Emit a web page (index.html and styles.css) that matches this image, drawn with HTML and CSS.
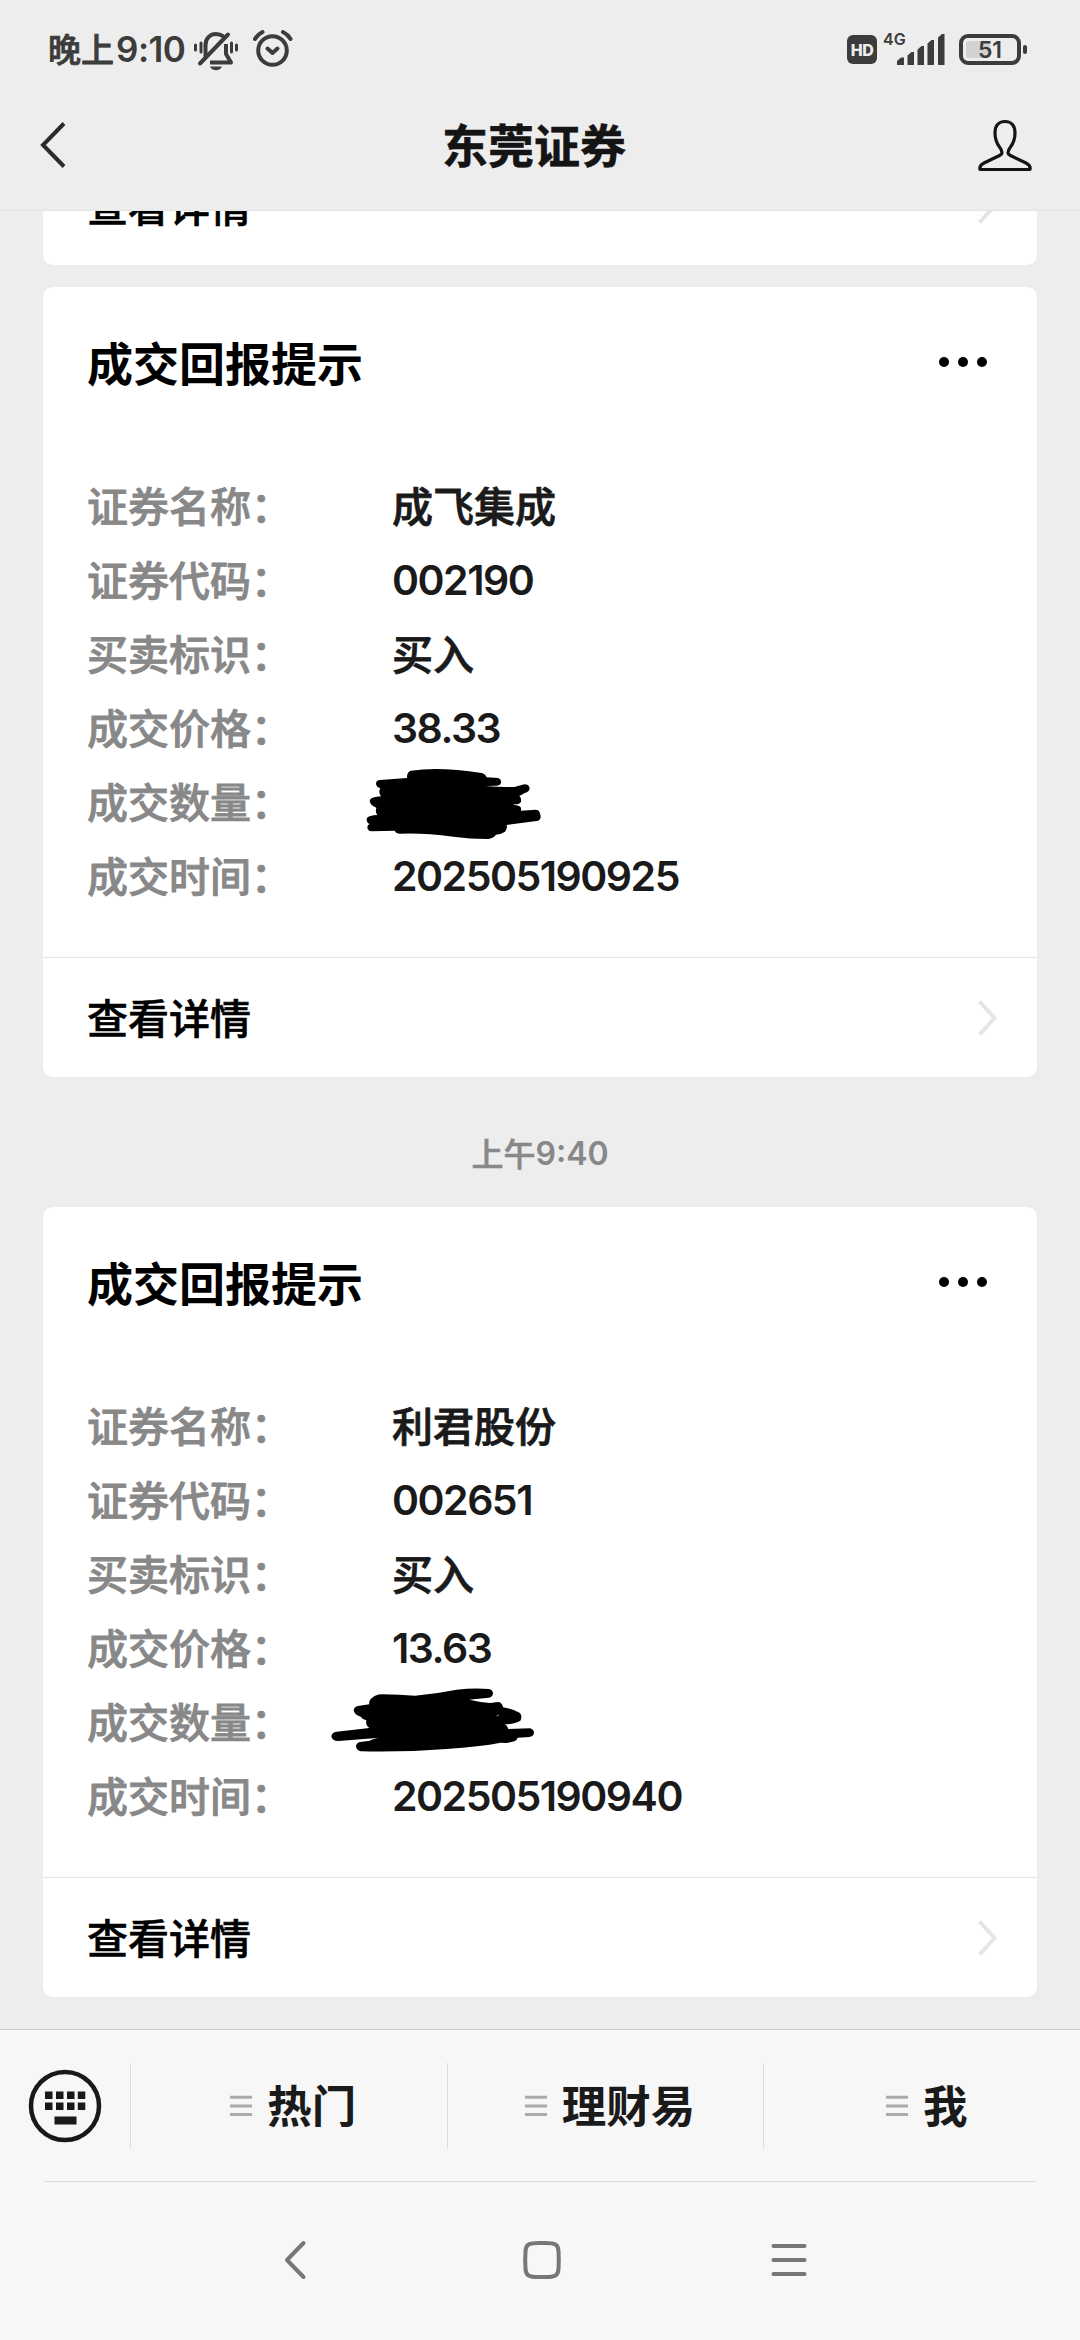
FILE: index.html
```html
<!DOCTYPE html>
<html lang="zh-CN">
<head>
    <meta charset="UTF-8">
    <meta name="viewport" content="width=device-width, initial-scale=1.0">
    <title>东莞证券</title>
    <link rel="stylesheet" href="styles.css">
</head>
<body>
    <div class="phone">
        <div class="status-bar">
            <div class="clock"><span class="clock-text">晚上</span><span class="clock-num">9:10</span></div>
            <svg class="icon-bell" width="46" height="42" viewBox="0 0 46 42" fill="none" stroke="#3c3c3c" stroke-width="4" stroke-linecap="round" stroke-linejoin="round">
                <path d="M2.500 15v5M8 13v9M38.500 13v9M43.500 15v5" stroke-width="3"/>
                <path d="M12.500 26V15c0-7 5-11 10.500-11 3 0 5 .8 7 2.200"/>
                <path d="M35 4.500L7 33.500"/>
                <path d="M33 14v10l5 8.500H17" stroke-linecap="butt"/>
                <path d="M17 36.500h12c-2 5-10 5-12 0z" fill="#3c3c3c" stroke="none"/>
            </svg>
            <svg class="icon-alarm" width="40" height="38" viewBox="0 0 40 38" fill="none" stroke="#3c3c3c" stroke-width="4" stroke-linecap="round" stroke-linejoin="round">
                <circle cx="19.500" cy="20.500" r="14.300"/>
                <path d="M14.500 18.500l5 4.500 5-4.500"/>
                <path d="M2 9c2-3.500 4.500-5.500 7.500-7M37.500 9c-2-3.500-4.500-5.500-7.500-7"/>
            </svg>
            <div class="status-right">
                <span class="hd">HD</span>
                <span class="net">4G</span>
                <svg class="icon-signal" width="48" height="31" viewBox="0 0 48 31" fill="#3c3c3c">
                    <path d="M0 27l4-3.500h3V31H0zM10.500 21.500l4-3.500H17v13h-6.500zM20.500 15.500l4-3.500H27v19h-6.500zM30.500 9.500l4-3.500H37v25h-6.500zM41 3.500L45 0h2.500v31H41z"/>
                </svg>
                <span class="battery"><span class="battery-fill"></span><span class="battery-num">51</span></span>
            </div>
        </div>

        <div class="nav-bar">
            <svg class="nav-back" width="26" height="46" viewBox="0 0 26 46" fill="none" stroke="#2b2b2b" stroke-width="4">
                <path d="M24 1.500L3 23l21 21.500"/>
            </svg>
            <h1>东莞证券</h1>
            <svg class="nav-user" width="54" height="52" viewBox="0 0 54 52" fill="none" stroke="#141414" stroke-width="3.200" stroke-linejoin="round">
                <path d="M27 2.500c-7 0-10 5-10 11.500 0 6 1.500 10 4.500 14 2 2.500 2.500 3.500 2.500 5.500s-1.500 2.500-3 3.300L6 44c-3 1.500-4.200 3-4.200 5.500 0 .7.500 1 1 1h48.400c.5 0 1-.3 1-1 0-2.500-1.200-4-4.200-5.500l-15-7.200c-1.500-.8-3-1.300-3-3.300s.5-3 2.500-5.500c3-4 4.500-8 4.500-14 0-6.500-3-11.500-10-11.500z"/>
            </svg>
        </div>

        <div class="messages">
            <div class="card">
                <div class="card-more">
                    <span>查看详情</span>
                    <svg width="19" height="36" viewBox="0 0 19 36" fill="none" stroke="#e5e5e5" stroke-width="4"><path d="M1.500 1.500L16.500 18l-15 16.500"/></svg>
                </div>
            </div>

            <div class="card">
                <div class="card-head">
                    <h2>成交回报提示</h2>
                    <div class="dots"><i></i><i></i><i></i></div>
                </div>
                <div class="rows">
                    <div class="row"><span class="label">证券名称：</span><span class="value">成飞集成</span></div>
                    <div class="row"><span class="label">证券代码：</span><span class="value num">002190</span></div>
                    <div class="row"><span class="label">买卖标识：</span><span class="value">买入</span></div>
                    <div class="row"><span class="label">成交价格：</span><span class="value num">38.33</span></div>
                    <div class="row">
                        <span class="label">成交数量：</span>
                        <span class="value">
                            <svg class="scribble scribble-a" width="220" height="74" viewBox="0 78 660 222">
                                <path d="M213 92Q300 80 425 99Q437 103 440 112L475 114Q485 118 483 129Q480 137 468 137L437 138Q490 142 523 141L553 133Q568 133 569 146Q567 155 556 158L538 168Q545 174 543 185Q540 192 527 193L518 194Q540 196 543 203V212L588 209Q599 210 600 221Q606 236 595 242L500 255Q503 267 495 275Q483 283 468 284Q458 297 440 297Q390 297 340 290Q250 278 180 281Q168 281 164 272L95 274Q82 273 82 261Q83 255 88 253Q77 245 81 234Q87 226 112 225Q105 218 109 203Q90 197 89 181Q93 171 123 169Q114 158 121 145Q108 142 108 130Q109 121 120 120L201 114Q200 96 213 92Z"/>
                            </svg>
                        </span>
                    </div>
                    <div class="row"><span class="label">成交时间：</span><span class="value num">202505190925</span></div>
                </div>
                <div class="card-more">
                    <span>查看详情</span>
                    <svg width="19" height="36" viewBox="0 0 19 36" fill="none" stroke="#e5e5e5" stroke-width="4"><path d="M1.500 1.500L16.500 18l-15 16.500"/></svg>
                </div>
            </div>

            <div class="time"><span class="time-text">上午</span><span class="time-num">9:40</span></div>

            <div class="card">
                <div class="card-head">
                    <h2>成交回报提示</h2>
                    <div class="dots"><i></i><i></i><i></i></div>
                </div>
                <div class="rows">
                    <div class="row"><span class="label">证券名称：</span><span class="value">利君股份</span></div>
                    <div class="row"><span class="label">证券代码：</span><span class="value num">002651</span></div>
                    <div class="row"><span class="label">买卖标识：</span><span class="value">买入</span></div>
                    <div class="row"><span class="label">成交价格：</span><span class="value num">13.63</span></div>
                    <div class="row">
                        <span class="label">成交数量：</span>
                        <span class="value">
                            <svg class="scribble scribble-b" width="240" height="74" viewBox="0 78 720 222">
                                <path d="M245 103Q300 104 345 107Q410 101 470 89Q520 83 568 87Q579 90 579 101Q577 112 565 113L508 119Q540 127 570 129L595 126Q607 128 609 142Q640 147 660 159Q668 170 661 182Q645 192 615 193Q624 199 625 207L690 205Q702 208 702 219Q700 230 688 231L653 233Q650 243 637 245L620 249L602 248Q540 260 440 267Q310 277 182 274Q168 270 168 257Q171 245 187 245L210 242Q218 236 240 233L115 243Q96 243 94 229Q95 217 110 215L208 204Q196 197 199 181Q187 178 182 170Q163 165 161 151Q163 138 178 137L208 133Q206 119 217 113Q227 104 245 103Z"/>
                                <path d="M590 168l6-3" stroke="#fff" stroke-width="2"/>
                            </svg>
                        </span>
                    </div>
                    <div class="row"><span class="label">成交时间：</span><span class="value num">202505190940</span></div>
                </div>
                <div class="card-more">
                    <span>查看详情</span>
                    <svg width="19" height="36" viewBox="0 0 19 36" fill="none" stroke="#e5e5e5" stroke-width="4"><path d="M1.500 1.500L16.500 18l-15 16.500"/></svg>
                </div>
            </div>
        </div>

        <div class="menu-bar">
            <div class="keyboard">
                <svg width="74" height="74" viewBox="0 0 74 74">
                    <circle cx="37" cy="37" r="34" fill="none" stroke="#191919" stroke-width="4.500"/>
                    <path fill="#191919" d="M17 22.500h7.500V30H17zM28 22.500h7.500V30H28zM39 22.500h7.500V30H39zM49.800 22.500h7.500V30h-7.500zM17 33.500h7.500V41H17zM28 33.500h7.500V41H28zM39 33.500h7.500V41H39zM49.800 33.500h7.500V41h-7.500zM26.500 47.500h22v8h-22z"/>
                </svg>
            </div>
            <div class="menu-item">
                <svg width="22" height="22" viewBox="0 0 22 22" stroke="#ababab" stroke-width="3"><path d="M0 2.300h22M0 11h22M0 19.600h22"/></svg>
                <span>热门</span>
            </div>
            <div class="menu-item">
                <svg width="22" height="22" viewBox="0 0 22 22" stroke="#ababab" stroke-width="3"><path d="M0 2.300h22M0 11h22M0 19.600h22"/></svg>
                <span>理财易</span>
            </div>
            <div class="menu-item">
                <svg width="22" height="22" viewBox="0 0 22 22" stroke="#ababab" stroke-width="3"><path d="M0 2.300h22M0 11h22M0 19.600h22"/></svg>
                <span>我</span>
            </div>
        </div>

        <div class="system-nav">
            <svg width="40" height="40" viewBox="0 0 40 40" fill="none" stroke="#777" stroke-width="4" stroke-linecap="round" stroke-linejoin="round"><path d="M28.500 3L12 20l16.500 17"/></svg>
            <svg width="40" height="40" viewBox="0 0 40 40" fill="none" stroke="#777" stroke-width="4"><path d="M20 3h3c10.500 0 13 1.500 13.500 8 .4 6 .4 12 0 18-.5 6.500-3 8-13.500 8h-6c-10.500 0-13-1.500-13.500-8-.4-6-.4-12 0-18C4 4.500 6.500 3 17 3z"/></svg>
            <svg width="40" height="40" viewBox="0 0 40 40" fill="none" stroke="#777" stroke-width="4" stroke-linecap="round"><path d="M4.500 6h31M4.500 20h31M4.500 34h31"/></svg>
        </div>
    </div>
</body>
</html>
```
FILE: styles.css
```css
* {
    margin: 0;
    padding: 0;
    box-sizing: border-box;
}

body {
    background-color: #ededed;
    font-family: "Noto Sans CJK SC", sans-serif;
    font-weight: 500;
    color: #1a1a1a;
}

svg {
    display: block;
    flex-shrink: 0;
}

.phone {
    width: 1080px;
    height: 2340px;
    display: flex;
    flex-direction: column;
    overflow: hidden;
}

/* 状态栏 */
.status-bar {
    height: 98px;
    padding: 0 53px 0 48px;
    display: flex;
    align-items: center;
    color: #3c3c3c;
}

.clock {
    display: flex;
    align-items: center;
    width: 145px;
    font-size: 33px;
    white-space: nowrap;
}

.clock-text {
    padding-bottom: 2px;
    -webkit-text-stroke: 0.8px;
}

.clock-num {
    font-family: Inter, sans-serif;
    font-size: 35px;
    font-weight: 600;
    letter-spacing: -0.5px;
    margin-left: 2px;
}

.icon-bell {
    margin-top: 3px;
}

.icon-alarm {
    margin-left: 14px;
}

.status-right {
    margin-left: auto;
    display: flex;
    align-items: center;
}

.hd {
    width: 30px;
    height: 29px;
    border-radius: 6px;
    background-color: #3c3c3c;
    color: #ededed;
    font: 800 16px/30px Inter, sans-serif;
    letter-spacing: -0.5px;
    text-align: center;
}

.net {
    width: 20px;
    height: 34px;
    margin-left: 6px;
    font: 600 16px/14px Inter, sans-serif;
}

.icon-signal {
    margin-right: 14px;
    margin-left: -6px;
}

.battery {
    position: relative;
    width: 62px;
    height: 31px;
    margin-right: 6px;
    border: 4px solid #3c3c3c;
    border-radius: 9px;
}

.battery::after {
    content: "";
    position: absolute;
    right: -10px;
    top: 7px;
    width: 4px;
    height: 9px;
    border-radius: 2px;
    background-color: #3c3c3c;
}

.battery-fill {
    position: absolute;
    left: 3px;
    top: 3px;
    width: 24px;
    height: 17px;
    border-radius: 3px;
    background-color: #d2d2d2;
}

.battery-num {
    position: relative;
    display: block;
    font: 600 23px/24px Inter, sans-serif;
    text-align: center;
}

/* 标题栏 */
.nav-bar {
    height: 113px;
    padding: 0 48px 18px 40px;
    display: flex;
    align-items: center;
    justify-content: space-between;
    border-bottom: 1px solid #e3e3e3;
}

.nav-bar h1 {
    margin-left: 24px;
    padding-bottom: 5px;
    font-size: 46px;
    font-weight: 700;
    line-height: 60px;
    color: #141414;
    -webkit-text-stroke: 0.6px;
}

/* 消息列表 */
.messages {
    height: 1818px;
    padding: 0 43px 32px;
    display: flex;
    flex-direction: column;
    justify-content: flex-end;
    overflow: hidden;
}

.card {
    flex-shrink: 0;
    background-color: #fff;
    border-radius: 10px;
}

.card + .card {
    margin-top: 22px;
}

.card-head {
    height: 183px;
    padding: 44px 50px 0 44px;
    display: flex;
    justify-content: space-between;
}

.card-head h2 {
    font-size: 46px;
    font-weight: 700;
    line-height: 60px;
    color: #000;
}

.dots {
    height: 62px;
    display: flex;
    align-items: center;
    gap: 9px;
}

.dots i {
    width: 10px;
    height: 10px;
    border-radius: 50%;
    background-color: #000;
}

.rows {
    padding: 0 44px 43px;
}

.row {
    display: flex;
    height: 74px;
    font-size: 41px;
    line-height: 68px;
    white-space: nowrap;
    -webkit-text-stroke: 0.8px;
}

.label {
    width: 305px;
    color: #888;
}

.value {
    position: relative;
}

.num {
    font-family: Inter, sans-serif;
    font-weight: 600;
    line-height: 73px;
    letter-spacing: -1.5px;
    -webkit-text-stroke: 0;
}

/* 涂抹遮盖 */
.scribble {
    position: absolute;
    top: 0;
}

.scribble-a {
    left: -52px;
}

.scribble-b {
    left: -92px;
}

.card-more {
    height: 120px;
    padding: 0 40px 0 44px;
    display: flex;
    align-items: center;
    justify-content: space-between;
    border-top: 1px solid #e5e5e5;
    font-size: 41px;
    color: #000;
}

.card-more span {
    padding-bottom: 4px;
    -webkit-text-stroke: 0.6px;
}

.time {
    flex-shrink: 0;
    height: 130px;
    padding-top: 22px;
    display: flex;
    align-items: center;
    justify-content: center;
    font-size: 32px;
    color: #888;
}

.time-text {
    padding-bottom: 3px;
    -webkit-text-stroke: 0.6px;
}

.time-num {
    font-family: Inter, sans-serif;
    font-weight: 600;
}

/* 底部菜单 */
.menu-bar {
    position: relative;
    height: 153px;
    display: flex;
    align-items: center;
    background-color: #f7f7f7;
    border-top: 1px solid #cbcbcb;
}

.menu-bar::after {
    content: "";
    position: absolute;
    left: 44px;
    right: 44px;
    bottom: 0;
    height: 1px;
    background-color: #dcdcdc;
}

.keyboard {
    width: 130px;
    padding-left: 28px;
}

.menu-item {
    flex: 1;
    height: 86px;
    padding-left: 9px;
    display: flex;
    align-items: center;
    justify-content: center;
    gap: 15px;
    border-left: 1px solid #dcdcdc;
    font-size: 44.5px;
    font-weight: 700;
}

.menu-item span {
    padding-bottom: 6px;
}

.system-nav {
    flex: 1;
    padding: 0 271px 2px 275px;
    display: flex;
    align-items: center;
    justify-content: space-between;
    background-color: #f7f7f7;
}
```
